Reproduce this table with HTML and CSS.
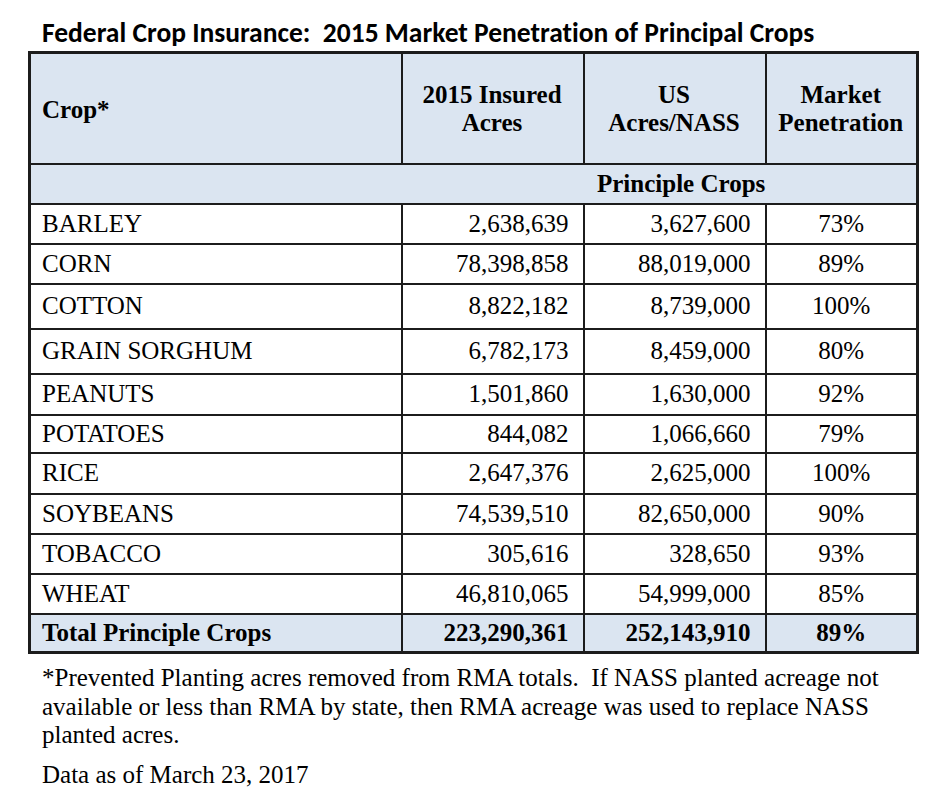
FILE: index.html
```html
<!DOCTYPE html>
<html>
<head>
<meta charset="utf-8">
<link rel="stylesheet" href="styles.css">
</head>
<body>
<div class="page">
  <h1 class="title">Federal Crop Insurance:&nbsp; 2015 Market Penetration of Principal Crops</h1>
  <table class="crops">
    <colgroup>
      <col class="c1"><col class="c2"><col class="c3"><col class="c4">
    </colgroup>
    <thead>
      <tr class="head">
        <th class="left">Crop*</th>
        <th>2015 Insured<br>Acres</th>
        <th>US<br>Acres/NASS</th>
        <th>Market<br>Penetration</th>
      </tr>
      <tr class="sub">
        <th colspan="4" class="subcell">Principle Crops</th>
      </tr>
    </thead>
    <tbody>
      <tr class="r40"><td>BARLEY</td><td class="num">2,638,639</td><td class="num">3,627,600</td><td class="pct">73%</td></tr>
      <tr class="r40"><td>CORN</td><td class="num">78,398,858</td><td class="num">88,019,000</td><td class="pct">89%</td></tr>
      <tr class="r45"><td>COTTON</td><td class="num">8,822,182</td><td class="num">8,739,000</td><td class="pct">100%</td></tr>
      <tr class="r45"><td>GRAIN SORGHUM</td><td class="num">6,782,173</td><td class="num">8,459,000</td><td class="pct">80%</td></tr>
      <tr class="r41"><td>PEANUTS</td><td class="num">1,501,860</td><td class="num">1,630,000</td><td class="pct">92%</td></tr>
      <tr class="r38"><td>POTATOES</td><td class="num">844,082</td><td class="num">1,066,660</td><td class="pct">79%</td></tr>
      <tr class="r41"><td>RICE</td><td class="num">2,647,376</td><td class="num">2,625,000</td><td class="pct">100%</td></tr>
      <tr class="r40"><td>SOYBEANS</td><td class="num">74,539,510</td><td class="num">82,650,000</td><td class="pct">90%</td></tr>
      <tr class="r40"><td>TOBACCO</td><td class="num">305,616</td><td class="num">328,650</td><td class="pct">93%</td></tr>
      <tr class="r40"><td>WHEAT</td><td class="num">46,810,065</td><td class="num">54,999,000</td><td class="pct">85%</td></tr>
      <tr class="total"><td>Total Principle Crops</td><td class="num">223,290,361</td><td class="num">252,143,910</td><td class="pct">89%</td></tr>
    </tbody>
  </table>
  <p class="note">*Prevented Planting acres removed from RMA totals.&nbsp; If NASS planted acreage not available or less than RMA by state, then RMA acreage was used to replace NASS planted acres.</p>
  <p class="date">Data as of March 23, 2017</p>
</div>
</body>
</html>
```
FILE: styles.css
```css
html, body {
  margin: 0;
  padding: 0;
  background: #ffffff;
}

body {
  font-family: "Liberation Serif", serif;
  color: #000000;
}

.page {
  padding: 0 0 0 28px;
}

.title {
  margin: 0;
  padding: 18px 0 0 14px;
  height: 33px;
  font-family: Carlito, sans-serif;
  font-weight: 700;
  font-size: 27.5px;
  line-height: 30px;
  white-space: nowrap;
  font-variant-ligatures: no-common-ligatures;
}

.crops {
  border-collapse: collapse;
  table-layout: fixed;
  width: 888px;
  border: 3px solid #1c1c1c;
  font-family: "Liberation Serif", serif;
  font-size: 25px;
}

.c1 { width: 372px; }
.c2 { width: 182px; }
.c3 { width: 182px; }
.c4 { width: 152px; }

.crops th,
.crops td {
  border: 2px solid #1c1c1c;
  padding: 0 12px 0 11px;
  vertical-align: middle;
}

.crops thead th {
  background: #dbe5f1;
  font-weight: 700;
}

.head {
  height: 111px;
}

.head th {
  text-align: center;
  line-height: 28.5px;
  padding-top: 2px;
}

.head th.left {
  text-align: left;
  padding-top: 4px;
}

.sub {
  height: 40px;
}

.crops .subcell {
  text-align: left;
  padding-left: 566px;
  border-left-width: 3px;
  line-height: 28px;
}

.r40 { height: 40px; }
.r45 { height: 45px; }
.r41 { height: 41px; }
.r38 { height: 38px; }

.crops td.num {
  text-align: right;
  padding-right: 14px;
}

.crops td.pct {
  text-align: center;
  padding-left: 12px;
}

.total {
  height: 39px;
  background: #dbe5f1;
  font-weight: 700;
}

.note {
  margin: 10px 0 0 0;
  padding-left: 14px;
  width: 860px;
  font-size: 25px;
  line-height: 28.5px;
}

.date {
  margin: 11px 0 0 0;
  padding-left: 14px;
  font-size: 25px;
  line-height: 28.5px;
}
```
